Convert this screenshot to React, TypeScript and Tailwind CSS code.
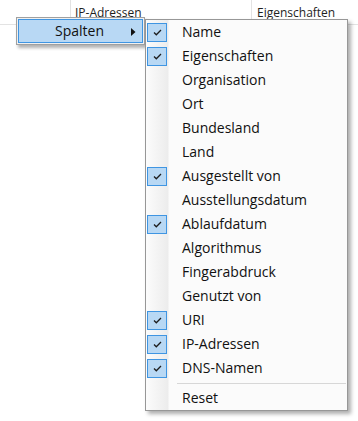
import React from "react";

type Col = { label: string; checked: boolean };

const columns: Col[] = [
  { label: "Name", checked: true },
  { label: "Eigenschaften", checked: true },
  { label: "Organisation", checked: false },
  { label: "Ort", checked: false },
  { label: "Bundesland", checked: false },
  { label: "Land", checked: false },
  { label: "Ausgestellt von", checked: true },
  { label: "Ausstellungsdatum", checked: false },
  { label: "Ablaufdatum", checked: true },
  { label: "Algorithmus", checked: false },
  { label: "Fingerabdruck", checked: false },
  { label: "Genutzt von", checked: false },
  { label: "URI", checked: true },
  { label: "IP-Adressen", checked: true },
  { label: "DNS-Namen", checked: true },
];

const CheckBox = () => (
  <div className="ml-[1px] w-[20px] h-[19px] border border-[#3f95e2] bg-[#b8d8f4] flex items-center justify-center">
    <svg width="9" height="7" viewBox="0 0 9 7">
      <polyline points="1,3.5 3.3,5.8 8,1" fill="none" stroke="#1d1d1d" strokeWidth="1.3" />
    </svg>
  </div>
);

const MenuItem = ({ col }: { col: Col }) => (
  <div className="h-[24px] flex items-center">
    <div className="w-[36px] flex items-center">{col.checked && <CheckBox />}</div>
    <span className="text-[14px] text-[#111] -mt-[2px]">{col.label}</span>
  </div>
);

export default function App() {
  return (
    <div
      className="relative w-[358px] h-[421px] bg-white overflow-hidden"
      style={{ fontFamily: '"Open Sans", sans-serif' }}
    >
      {/* list header */}
      <div className="flex h-[25px] border-b border-[#e3e3e3] text-[12px] text-[#1e1e1e]">
        <div className="w-[71px] border-r border-[#e3e3e3]" />
        <div className="w-[181px] border-r border-[#e3e3e3] pl-[4px] pt-[4px]">IP-Adressen</div>
        <div className="flex-1 pl-[5px] pt-[4px]">Eigenschaften</div>
      </div>

      {/* parent menu */}
      <div className="absolute left-[16px] top-[17px] w-[129px] h-[28px] border border-[#a0a0a0] bg-[#f0f0f0] p-[1px] shadow-[2px_3px_3px_rgba(0,0,0,0.3)]">
        <div className="h-full border border-[#3f95e2] bg-[#b8d8f4] flex items-center pl-[36px] relative">
          <span className="text-[14px] text-[#111] -mt-[1px]">Spalten</span>
          <svg className="absolute left-[112px] top-[8px]" width="5" height="8" viewBox="0 0 5 8">
            <polygon points="0,0 4.5,4 0,8" fill="#111" />
          </svg>
        </div>
      </div>

      {/* submenu */}
      <div className="absolute left-[145px] top-[19px] w-[203px] border border-[#979797] bg-[linear-gradient(to_right,#fcfcfc,#ececec_22px,#fbfbfb_23px)] shadow-[3px_3px_4px_rgba(0,0,0,0.32)]">
        {columns.map((c) => (
          <MenuItem key={c.label} col={c} />
        ))}
        <div className="h-[6px] flex items-center pl-[31px] pr-[1px]">
          <div className="w-full h-[1px] bg-[#d7d7d7]" />
        </div>
        <div className="h-[24px] flex items-center pl-[36px]">
          <span className="text-[14px] text-[#111] -mt-[2px]">Reset</span>
        </div>
      </div>
    </div>
  );
}
